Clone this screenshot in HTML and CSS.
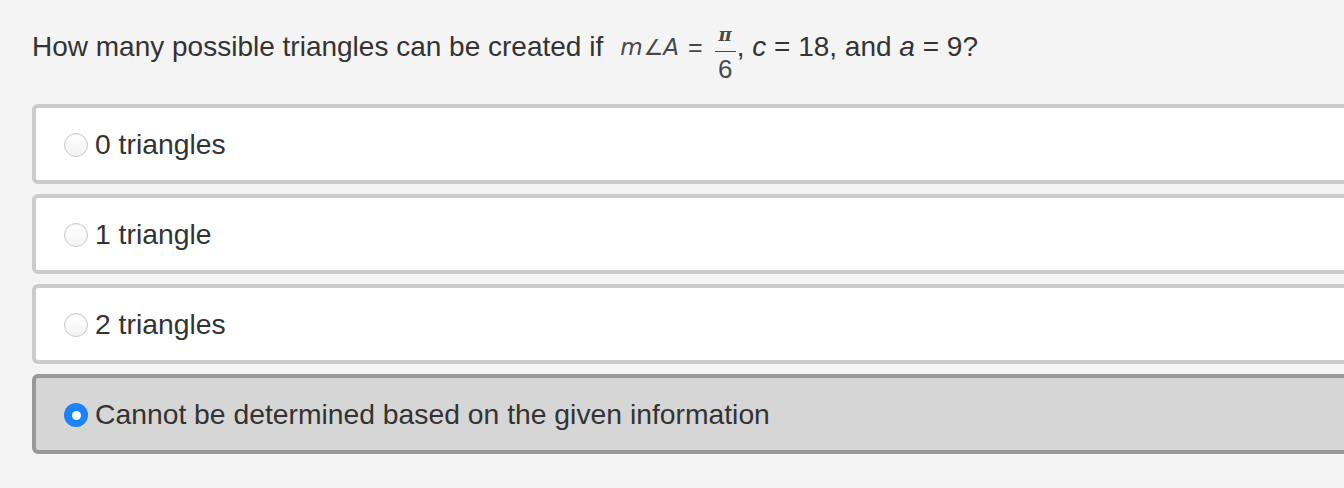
FILE: index.html
```html
<!DOCTYPE html>
<html>
<head>
<meta charset="utf-8">
<link rel="stylesheet" href="styles.css">
</head>
<body>
<div class="page">
  <div class="question">
    <span class="q-text">How many possible triangles can be created if</span>
    <span class="math">
      <span class="mi">m</span><span class="angle">∠</span><span class="mi">A</span><span class="meq">=</span><span class="frac"><span class="num">π</span><span class="bar"></span><span class="den">6</span></span></span><span class="q-text">, <i>c</i> = 18, and <i>a</i> = 9?</span>
  </div>
  <div class="options">
    <label class="option"><span class="radio"></span><span class="opt-text">0 triangles</span></label>
    <label class="option"><span class="radio"></span><span class="opt-text">1 triangle</span></label>
    <label class="option"><span class="radio"></span><span class="opt-text">2 triangles</span></label>
    <label class="option selected"><span class="radio checked"></span><span class="opt-text">Cannot be determined based on the given information</span></label>
  </div>
</div>
</body>
</html>
```
FILE: styles.css
```css
html, body {
  margin: 0;
  padding: 0;
  background: #f4f4f4;
  overflow: hidden;
}
body {
  font-family: "Liberation Sans", Arial, Helvetica, sans-serif;
  color: #333333;
  width: 1344px;
  height: 488px;
}
.page {
  padding: 0 0 0 32px;
}
.question {
  display: flex;
  align-items: center;
  height: 94px;
  font-size: 28px;
  white-space: nowrap;
}
.q-text {
  display: inline-block;
}
.q-text i {
  font-style: italic;
}
.math {
  display: inline-flex;
  align-items: center;
  margin-left: 17px;
  color: #484848;
  font-size: 22px;
}
.mi {
  font-style: italic;
  font-family: "DejaVu Sans", sans-serif;
  font-size: 23px;
  font-weight: 300;
}
.angle {
  font-family: "DejaVu Sans", sans-serif;
  font-size: 22px;
  margin: 0 0 0 1px;
}
.meq {
  margin: 0 12px 0 9px;
  font-size: 25px;
}
.frac {
  display: inline-flex;
  flex-direction: column;
  align-items: center;
  width: 21px;
  margin-top: 18px;
}
.num {
  font-family: "DejaVu Serif", serif;
  font-style: italic;
  font-weight: bold;
  font-size: 18px;
  line-height: 10px;
  height: 16px;
}
.bar {
  width: 21px;
  height: 1.5px;
  background: #484848;
  margin: 5px 0 4px;
}
.den {
  font-size: 26px;
  line-height: 26px;
}
.math + .q-text {
  margin-left: 1px;
}
.options {
  display: flex;
  flex-direction: column;
  gap: 10px;
  width: 1360px;
  margin-top: 10px;
}
.option {
  display: flex;
  align-items: center;
  box-sizing: border-box;
  height: 80px;
  border: 4px solid #cbcbcb;
  border-radius: 6px;
  background: #ffffff;
  padding-left: 28px;
  font-size: 28.3px;
}
.option.selected {
  background: #d6d6d6;
  border-color: #989898;
}
.radio {
  box-sizing: border-box;
  width: 24px;
  height: 24px;
  border-radius: 50%;
  border: 1px solid #c9c9c9;
  background: linear-gradient(#ffffff, #f2f2f2);
  box-shadow: inset 0 1px 1px rgba(0,0,0,0.06);
  margin-right: 7px;
  margin-top: 2px;
  flex: none;
  display: flex;
  align-items: center;
  justify-content: center;
}
.radio.checked {
  border: none;
  background: #1c83fb;
  box-shadow: none;
}
.radio.checked::after {
  content: "";
  width: 9px;
  height: 9px;
  border-radius: 50%;
  background: #ffffff;
}
.opt-text {
  line-height: 30px;
}
```
